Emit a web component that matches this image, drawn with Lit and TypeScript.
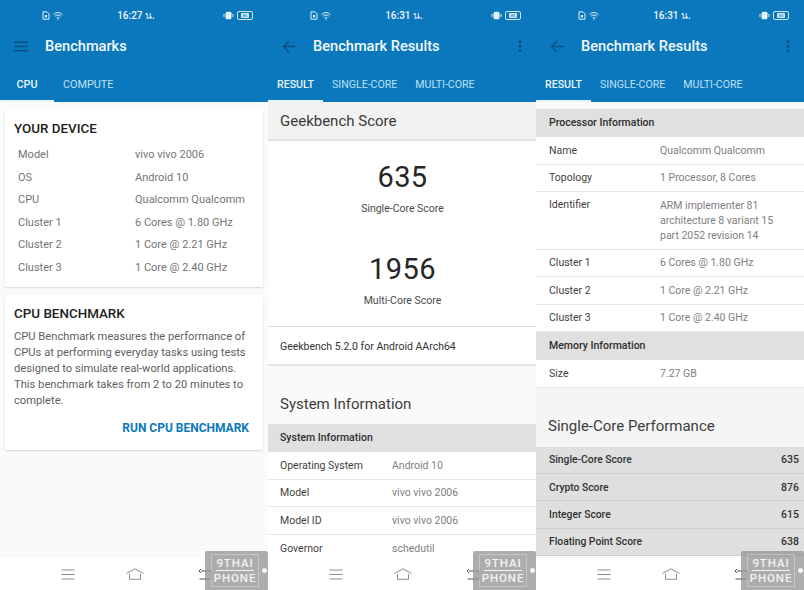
import { LitElement, html, css, svg } from "lit";
import { customElement } from "lit/decorators.js";

const navBar = svg`
  <svg class="nav-ic" width="14" height="11" viewBox="0 0 14 11"><path d="M.5 1h13M.5 5.500h13M.5 10h13" stroke="#8b8b8b" stroke-width="1" fill="none"/></svg>`;
const navHome = svg`
  <svg class="nav-ic" width="18" height="12" viewBox="0 0 18 12"><path d="M.5 5.500 9 .8l8.500 4.700M3.500 6v5.300h11V6" stroke="#8b8b8b" stroke-width="1" fill="none"/></svg>`;
const navBack = svg`
  <svg class="nav-ic" width="14" height="12" viewBox="0 0 14 12"><path d="M3 3h10.500v8H1.500M3 1 1 3l2 2" stroke="#555" stroke-width="1" fill="none"/></svg>`;

@customElement("phone-chrome")
class PhoneChrome extends LitElement {
  static properties = {
    time: {}, title: {}, battery: {}, back: { type: Boolean }, tabs: { type: Array }, wide: { type: Boolean },
  };
  time = ""; title = ""; battery = ""; back = false; tabs: string[] = []; wide = false;

  static styles = css`
    :host { display: flex; flex-direction: column; width: 268px; height: 590px; position: relative; overflow: hidden; background: #fafafa; font-family: Roboto, "Liberation Sans", sans-serif; }
    .head { background: #0b78bd; height: 102px; flex: none; color: #fff; display: flex; flex-direction: column; box-sizing: border-box; }
    .status { height: 31px; display: grid; grid-template-columns: 1fr auto 1fr; align-items: center; padding: 0 14px 0 42px; }
    .st-left { display: flex; gap: 3px; align-items: center; }
    .st-right { display: flex; gap: 3px; align-items: center; justify-content: flex-end; }
    .clock { font-size: 10px; font-weight: 500; color: #f1f7fb; margin-left: -24px; }
    .batt { width: 14px; height: 7px; border: 1px solid #cfe5f4; border-radius: 2px; display: flex; align-items: center; justify-content: center; margin-right: 1px; }
    .batt span { font-size: 4px; line-height: 5px; background: #cfe5f4; color: #0b78bd; padding: 0 2px; border-radius: 1px; }
    .bar { height: 30px; display: flex; align-items: center; padding: 0 14px; }
    .lead { width: 31px; display: flex; flex: none; }
    .title { font-size: 14.600px; font-weight: 500; flex: 1; color: #f2f8fc; }
    .tabs { margin-top: auto; display: flex; height: 35px; }
    .tab { font-size: 10.600px; font-weight: 400; color: #bfe0f5; display: flex; align-items: center; padding: 0 9px; box-sizing: border-box; justify-content: center; }
    .tabs.narrow .tab { font-size: 10.800px; }
    .tab.on { color: #eaf5fc; font-weight: 500; border-bottom: 2px solid #e8f4fb; padding: 2px 0 0; width: 55px; }
    .tabs.narrow .tab.on { width: 54px; }
    .body { flex: 1; min-height: 0; overflow: hidden; }
    .nav { height: 32px; flex: none; background: #fff; display: flex; align-items: center; padding-left: 61px; box-sizing: border-box; }
    .nav > :nth-child(1) { margin-right: 51px; }
    .nav > :nth-child(2) { margin-right: 54px; }
    .mark { position: absolute; left: 205px; top: 551px; width: 63px; height: 39px; background: rgba(150,150,150,.78); border-radius: 2px 2px 0 0; box-sizing: border-box; padding: 3px 9px 3px 6px; display: flex; align-items: center; }
    .mark-in { border: 1px solid rgba(255,255,255,.3); flex: 1; height: 100%; box-sizing: border-box; display: flex; flex-direction: column; align-items: center; justify-content: center; color: #f2f2f2; font-family: Roboto, "Liberation Sans", sans-serif; font-size: 11.500px; font-weight: 500; line-height: 13px; letter-spacing: .9px; }
    .mark-in b { font-weight: 500; border-bottom: 1px solid #f2f2f2; line-height: 12px; padding-bottom: 1px; margin-bottom: 1px; }
    .dot { position: absolute; right: 1px; top: 17px; width: 5px; height: 5px; border-radius: 50%; background: #f4f4f4; }
  `;

  render() {
    return html`
      <div class="head">
        <div class="status">
          <div class="st-left">
            <svg width="8" height="9" viewBox="0 0 8 9"><path d="M1 .8h4l2 2v5.400H1z" fill="none" stroke="#e6f2fa" stroke-width="1"/><rect x="3" y="4" width="2" height="2.400" fill="#e6f2fa"/></svg>
            <svg width="10" height="8" viewBox="0 0 10 8"><path d="M.5 2.500C3 0 7 0 9.500 2.500M2 4.200C3.800 2.600 6.200 2.600 8 4.200M3.600 5.800C4.400 5.200 5.600 5.200 6.400 5.800" fill="none" stroke="#e6f2fa" stroke-width="1"/><circle cx="5" cy="7" r=".8" fill="#e6f2fa"/></svg>
          </div>
          <div class="clock">${this.time}</div>
          <div class="st-right">
            <svg width="11" height="9" viewBox="0 0 11 9"><rect x="2.500" y=".8" width="6" height="7.400" rx="1.500" fill="#e6f2fa"/><path d="M1 3v3M10 3v3" stroke="#e6f2fa" stroke-width="1"/></svg>
            <div class="batt"><span>${this.battery}</span></div>
          </div>
        </div>
        <div class="bar">
          <div class="lead">
            ${this.back
              ? html`<svg width="14" height="13" viewBox="0 0 14 13"><path d="M13.500 6.500H1.500M7 1 1.500 6.500 7 12" fill="none" stroke="#0a4f82" stroke-width="1.400"/></svg>`
              : html`<svg width="14" height="11" viewBox="0 0 14 11"><path d="M0 1.200h14M0 5.500h14M0 9.800h14" stroke="#0a4f82" stroke-width="1.500" fill="none"/></svg>`}
          </div>
          <div class="title">${this.title}</div>
          ${this.back
            ? html`<svg width="4" height="12" viewBox="0 0 4 12"><circle cx="2" cy="1.500" r="1.500" fill="#0a4f82"/><circle cx="2" cy="6" r="1.500" fill="#0a4f82"/><circle cx="2" cy="10.500" r="1.500" fill="#0a4f82"/></svg>`
            : ""}
        </div>
        <div class="tabs ${this.wide ? "wide" : "narrow"}">
          ${this.tabs.map((t, i) => html`<div class="tab ${i === 0 ? "on" : ""}">${t}</div>`)}
        </div>
      </div>
      <div class="body"><slot></slot></div>
      <div class="nav">${navBar}${navHome}${navBack}</div>
      <div class="mark"><div class="mark-in"><b>9THAI</b><span>PHONE</span></div><div class="dot"></div></div>
    `;
  }
}

const device: [string, string][] = [
  ["Model", "vivo vivo 2006"], ["OS", "Android 10"], ["CPU", "Qualcomm Qualcomm"],
  ["Cluster 1", "6 Cores @ 1.80 GHz"], ["Cluster 2", "1 Core @ 2.21 GHz"], ["Cluster 3", "1 Core @ 2.40 GHz"],
];

@customElement("app-root")
class AppRoot extends LitElement {
  static styles = css`
    :host { display: flex; width: 804px; height: 590px; overflow: hidden; font-family: Roboto, "Liberation Sans", sans-serif; }
    .page1 { padding: 7px 5px; display: flex; flex-direction: column; gap: 8px; }
    .card { background: #fff; border-radius: 2px; box-shadow: 0 1px 2px rgba(0,0,0,.14); padding: 9px 9px 0; box-sizing: border-box; }
    .c1 { height: 178px; padding-top: 10px; }
    .c2 { height: 155px; }
    .ct { font-size: 13.400px; font-weight: 500; color: #212121; line-height: 20px; }
    .kv { display: grid; grid-template-columns: 117px 1fr; padding-left: 4px; font-size: 11px; color: #757575; line-height: 22.600px; margin-top: 5px; }
    .desc { font-size: 11.200px; color: #616161; line-height: 16px; margin-top: 5px; }
    .run { text-align: right; font-size: 12px; font-weight: 700; color: #0b78bd; margin: 12px 5px 0 0; line-height: 14px; }
    .bighead { height: 39px; background: #f2f2f2; border-bottom: 2px solid #e2e2e2; font-size: 15px; color: #3a3a3a; display: flex; align-items: center; padding-left: 12px; box-sizing: border-box; }
    .scores { background: #fff; height: 186px; border-bottom: 1px solid #dedede; text-align: center; box-sizing: border-box; padding: 19px 0 0 1px; }
    .num { font-size: 29px; color: #262626; line-height: 35px; letter-spacing: .4px; }
    .lbl { font-size: 10.500px; color: #4a4a4a; line-height: 14px; margin-top: 6.500px; margin-bottom: 36.500px; }
    .ver { background: #fff; height: 39px; display: flex; align-items: center; font-size: 10.500px; color: #333; padding: 1px 0 0 12px; border-bottom: 2px solid #e4e4e4; box-sizing: border-box; }
    .sec { font-size: 15px; color: #3d3d3d; padding-left: 12px; height: 58px; display: flex; align-items: flex-end; padding-bottom: 11px; box-sizing: border-box; }
    .sub { background: #e0e0e0; height: 28px; display: flex; align-items: center; padding: 0 0 1px 12px; font-size: 10.500px; font-weight: 500; color: #2e2e2e; box-sizing: border-box; }
    .row { background: #fff; height: 27.600px; display: grid; grid-template-columns: 112px 1fr; align-items: center; padding: 0 12px; border-bottom: 1px solid #e8e8e8; font-size: 10.500px; color: #3f3f3f; box-sizing: border-box; }
    .row .v { color: #808080; line-height: 15px; }
    .row.tall { align-items: start; padding-top: 6px; }
    .p3 { padding-top: 7px; }
    .p3 .row { height: 27.500px; padding-left: 13px; grid-template-columns: 111px 1fr; }
    .p3 .row.tall { height: 57.500px; }
    .p3 .sub { padding-left: 13px; }
    .perf { background: #dfdfdf; height: 27.400px; display: flex; justify-content: space-between; align-items: center; padding: 0 5px 0 13px; border-bottom: 1px solid #cfcfcf; font-size: 10.300px; font-weight: 500; color: #333; box-sizing: border-box; }
    .perf b { font-weight: 500; font-size: 10.500px; }
    .sec3 { height: 59px; padding: 0 0 12px 12px; background: #f5f5f5; }
  `;

  render() {
    const result = ["RESULT", "SINGLE-CORE", "MULTI-CORE"];
    return html`
      <phone-chrome time="16:27 น." title="Benchmarks" battery="86" .tabs=${["CPU", "COMPUTE"]}>
        <div class="page1">
          <div class="card c1">
            <div class="ct">YOUR DEVICE</div>
            <div class="kv">${device.map(([k, v]) => html`<div>${k}</div><div>${v}</div>`)}</div>
          </div>
          <div class="card c2">
            <div class="ct">CPU BENCHMARK</div>
            <div class="desc">CPU Benchmark measures the performance of CPUs at performing everyday tasks using tests designed to simulate real-world applications. This benchmark takes from 2 to 20 minutes to complete.</div>
            <div class="run">RUN CPU BENCHMARK</div>
          </div>
        </div>
      </phone-chrome>

      <phone-chrome time="16:31 น." title="Benchmark Results" battery="85" back wide .tabs=${result}>
        <div class="bighead">Geekbench Score</div>
        <div class="scores">
          <div class="num">635</div><div class="lbl">Single-Core Score</div>
          <div class="num">1956</div><div class="lbl">Multi-Core Score</div>
        </div>
        <div class="ver">Geekbench 5.2.0 for Android AArch64</div>
        <div class="sec">System Information</div>
        <div class="sub">System Information</div>
        ${[["Operating System", "Android 10"], ["Model", "vivo vivo 2006"], ["Model ID", "vivo vivo 2006"], ["Governor", "schedutil"]].map(
          ([k, v]) => html`<div class="row"><div>${k}</div><div class="v">${v}</div></div>`
        )}
      </phone-chrome>

      <phone-chrome time="16:31 น." title="Benchmark Results" battery="85" back wide .tabs=${result}>
        <div class="p3">
          <div class="sub">Processor Information</div>
          <div class="row"><div>Name</div><div class="v">Qualcomm Qualcomm</div></div>
          <div class="row"><div>Topology</div><div class="v">1 Processor, 8 Cores</div></div>
          <div class="row tall"><div>Identifier</div><div class="v">ARM implementer 81 architecture 8 variant 15 part 2052 revision 14</div></div>
          <div class="row"><div>Cluster 1</div><div class="v">6 Cores @ 1.80 GHz</div></div>
          <div class="row"><div>Cluster 2</div><div class="v">1 Core @ 2.21 GHz</div></div>
          <div class="row"><div>Cluster 3</div><div class="v">1 Core @ 2.40 GHz</div></div>
          <div class="sub">Memory Information</div>
          <div class="row"><div>Size</div><div class="v">7.27 GB</div></div>
          <div class="sec sec3">Single-Core Performance</div>
          ${[["Single-Core Score", "635"], ["Crypto Score", "876"], ["Integer Score", "615"], ["Floating Point Score", "638"]].map(
            ([k, v]) => html`<div class="perf"><span>${k}</span><b>${v}</b></div>`
          )}
        </div>
      </phone-chrome>
    `;
  }
}
